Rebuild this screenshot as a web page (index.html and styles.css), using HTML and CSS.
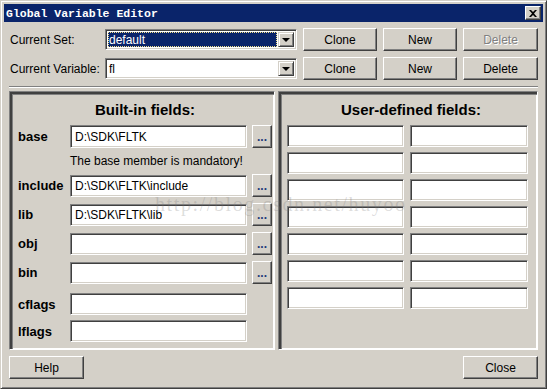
FILE: index.html
```html
<!DOCTYPE html>
<html lang="en">
<head>
    <meta charset="UTF-8">
    <title>Global Variable Editor</title>
    <link rel="stylesheet" href="styles.css">
</head>
<body>
    <div class="window">
        <div class="titlebar">
            <span class="title">Global Variable Editor</span>
            <span class="title-close">
                <svg width="8" height="7" viewBox="0 0 8 7"><path d="M0 0h2l2 2 2-2h2L5 3.5 8 7H6L4 5 2 7H0l3-3.5z" fill="#000"/></svg>
            </span>
        </div>

        <div class="content">
            <div class="top-row">
                <span class="top-label">Current Set:</span>
                <div class="combo">
                    <span class="combo-text selected"><span class="focus">default</span></span>
                    <span class="combo-arrow"><i></i></span>
                </div>
                <button class="btn">Clone</button>
                <button class="btn">New</button>
                <button class="btn" disabled>Delete</button>
            </div>
            <div class="top-row">
                <span class="top-label">Current Variable:</span>
                <div class="combo">
                    <span class="combo-text">fl</span>
                    <span class="combo-arrow"><i></i></span>
                </div>
                <button class="btn">Clone</button>
                <button class="btn">New</button>
                <button class="btn">Delete</button>
            </div>

            <div class="separator"></div>

            <div class="panels">
                <div class="panel builtin">
                    <h2>Built-in fields:</h2>
                    <div class="field-row">
                        <span class="field-label">base</span>
                        <span class="field">D:\SDK\FLTK</span>
                        <button class="btn dots">...</button>
                    </div>
                    <div class="note">The base member is mandatory!</div>
                    <div class="field-row">
                        <span class="field-label">include</span>
                        <span class="field">D:\SDK\FLTK\include</span>
                        <button class="btn dots">...</button>
                    </div>
                    <div class="field-row">
                        <span class="field-label">lib</span>
                        <span class="field">D:\SDK\FLTK\lib</span>
                        <button class="btn dots">...</button>
                    </div>
                    <div class="field-row">
                        <span class="field-label">obj</span>
                        <span class="field"></span>
                        <button class="btn dots">...</button>
                    </div>
                    <div class="field-row">
                        <span class="field-label">bin</span>
                        <span class="field"></span>
                        <button class="btn dots">...</button>
                    </div>
                    <div class="field-row flags first-flag">
                        <span class="field-label">cflags</span>
                        <span class="field"></span>
                    </div>
                    <div class="field-row flags">
                        <span class="field-label">lflags</span>
                        <span class="field"></span>
                    </div>
                </div>

                <div class="panel userdef">
                    <h2>User-defined fields:</h2>
                    <div class="user-grid">
                        <span class="field"></span><span class="field"></span>
                        <span class="field"></span><span class="field"></span>
                        <span class="field"></span><span class="field"></span>
                        <span class="field"></span><span class="field"></span>
                        <span class="field"></span><span class="field"></span>
                        <span class="field"></span><span class="field"></span>
                        <span class="field"></span><span class="field"></span>
                    </div>
                </div>
            </div>

            <div class="footer">
                <button class="btn">Help</button>
                <button class="btn">Close</button>
            </div>

            <div class="watermark">http://blog.csdn.net/huyoo</div>
        </div>
    </div>
</body>
</html>
```

FILE: styles.css
```css
body {
    margin: 0;
    background-color: #d4d0c8;
    font-family: "Liberation Sans", Arial, sans-serif;
    font-size: 12px;
    color: #000;
}
.window {
    box-sizing: border-box;
    width: 547px;
    height: 389px;
    background-color: #d4d0c8;
    border: 1px solid;
    border-color: #d4d0c8 #404040 #404040 #d4d0c8;
    box-shadow: inset 1px 1px #ffffff, inset -1px -1px #808080;
    padding: 3px;
    display: flex;
    flex-direction: column;
}
.titlebar {
    height: 18px;
    background-color: #0a246a;
    display: flex;
    align-items: center;
    justify-content: space-between;
    padding: 0 2px 0 2px;
    flex-shrink: 0;
}
.title {
    color: #fff;
    font-family: "Liberation Mono", monospace;
    font-weight: bold;
    font-size: 11.5px;
}
.title-close {
    box-sizing: border-box;
    width: 16px;
    height: 14px;
    background-color: #d4d0c8;
    border: 1px solid;
    border-color: #ffffff #404040 #404040 #ffffff;
    box-shadow: inset -1px -1px #808080;
    display: flex;
    align-items: center;
    justify-content: center;
    padding-right: 1px;
}
.content {
    position: relative;
    flex: 1;
    padding: 6px 5px 0 5px;
}
.top-row {
    display: flex;
    align-items: center;
    height: 23px;
    margin-bottom: 6px;
}
.top-label {
    width: 95px;
    padding-left: 1px;
}
.combo {
    box-sizing: border-box;
    width: 192px;
    height: 21px;
    margin-right: 6px;
    display: flex;
    background-color: #fff;
    border: 1px solid;
    border-color: #808080 #ffffff #ffffff #808080;
    box-shadow: inset 1px 1px #404040, inset -1px -1px #d4d0c8;
    padding: 2px;
}
.combo-text {
    flex: 1;
    display: flex;
    align-items: center;
    padding-left: 1px;
    margin-right: 1px;
}
.combo-text.selected {
    background-color: #0a246a;
    color: #fff;
    outline: 1px dotted #f4e08c;
    outline-offset: -1px;
    padding-left: 1px;
}
.combo-arrow {
    box-sizing: border-box;
    width: 16px;
    height: 100%;
    background-color: #d4d0c8;
    border: 1px solid;
    border-color: #d4d0c8 #404040 #404040 #d4d0c8;
    box-shadow: inset 1px 1px #ffffff, inset -1px -1px #808080;
    display: flex;
    align-items: center;
    justify-content: center;
}
.combo-arrow i {
    width: 0;
    height: 0;
    border-left: 4px solid transparent;
    border-right: 4px solid transparent;
    border-top: 4px solid #000;
}
.btn {
    box-sizing: border-box;
    width: 74px;
    height: 23px;
    margin-right: 6px;
    padding: 0;
    background-color: #d4d0c8;
    border: 1px solid;
    border-color: #ffffff #404040 #404040 #ffffff;
    box-shadow: inset -1px -1px #808080;
    font-family: "Liberation Sans", Arial, sans-serif;
    font-size: 12px;
    color: #000;
}
.top-row .btn:last-child {
    width: 75px;
    margin-right: 0;
}
.btn:disabled {
    color: #808080;
    text-shadow: 1px 1px #ffffff;
}
.separator {
    height: 1px;
    background-color: #808080;
    border-bottom: 1px solid #ffffff;
}
.panels {
    display: flex;
    gap: 3px;
    margin-top: 3px;
    height: 259px;
}
.panel {
    box-sizing: border-box;
    height: 100%;
    border: 1px solid;
    border-color: #808080 #ffffff #ffffff #808080;
    box-shadow: inset 2px 2px #404040, inset 3px 3px #808080, inset -1px -1px #ffffff;
    padding: 8px 2px 0 8px;
}
.panel h2 {
    margin: 0 0 5px 0;
    height: 20px;
    line-height: 20px;
    font-size: 15px;
    font-weight: bold;
    text-align: center;
}
.builtin {
    width: 266px;
}
.userdef {
    width: 260px;
}
.field-row {
    display: flex;
    align-items: center;
    height: 23px;
    margin-bottom: 6px;
}
.field-label {
    width: 52px;
    font-size: 13px;
    font-weight: bold;
}
.field {
    box-sizing: border-box;
    display: flex;
    align-items: center;
    width: 177px;
    height: 22px;
    background-color: #fff;
    border: 1px solid;
    border-color: #808080 #ffffff #ffffff #808080;
    box-shadow: inset 1px 1px #404040, inset -1px -1px #d4d0c8;
    padding-left: 4px;
    font-size: 12px;
    white-space: nowrap;
}
.field-row:first-of-type .field {
    height: 23px;
}
.btn.dots {
    width: 20px;
    height: 23px;
    margin: 0 0 0 5px;
    font-weight: bold;
    color: #1f3a7a;
}
.note {
    height: 26px;
    line-height: 26px;
    margin-top: -6px;
    padding-left: 52px;
    font-size: 12px;
}
.flags {
    height: 22px;
    margin-bottom: 5px;
}
.first-flag {
    margin-top: 9px;
}
.user-grid {
    display: grid;
    grid-template-columns: 117px 118px;
    column-gap: 6px;
    row-gap: 5px;
}
.user-grid .field {
    width: auto;
}
.footer {
    display: flex;
    justify-content: space-between;
    margin-top: 6px;
}
.footer .btn {
    width: 75px;
    margin: 0;
}
.watermark {
    position: absolute;
    left: 151px;
    top: 171px;
    font-family: "Liberation Serif", serif;
    font-size: 20px;
    letter-spacing: 1.6px;
    color: rgba(120, 120, 120, 0.25);
    pointer-events: none;
}
```
